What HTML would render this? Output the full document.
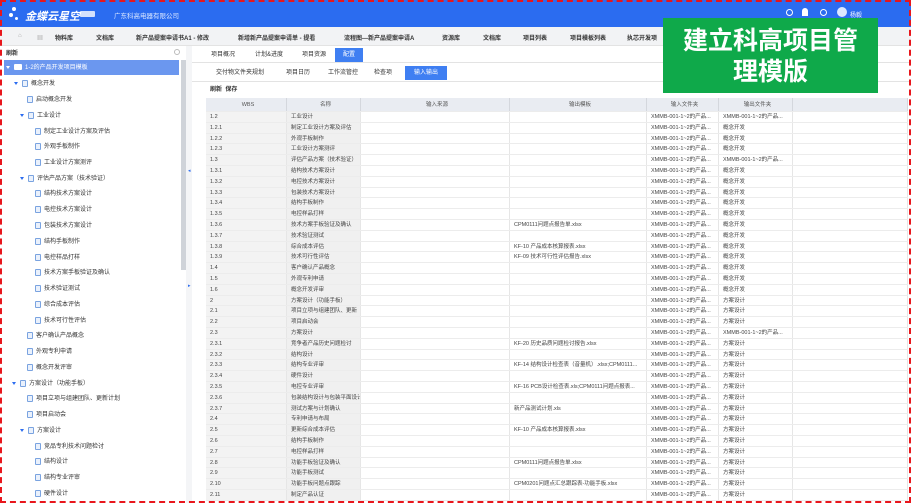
<!DOCTYPE html>
<html><head><meta charset="utf-8"><style>
*{margin:0;padding:0;box-sizing:border-box}
body{width:911px;height:503px;overflow:hidden;background:#fff;font-family:"Liberation Sans","Noto Sans CJK SC",sans-serif;font-size:6px;color:#333;position:relative}
.a{position:absolute;white-space:nowrap}
#top{left:0;top:0;width:911px;height:27px;background:#2b6cf0}
#nav{left:0;top:27px;width:911px;height:19px;background:#f2f3f5;border-bottom:1px solid #e3e3e3}
#nav span{position:absolute;top:6px;font-size:6px;font-weight:bold;color:#333}
.tree div{position:absolute;height:12px;line-height:12px;font-size:6px;color:#333}
.ic{display:inline-block;width:6px;height:7px;border:1px solid #7aa3e0;border-radius:1px;background:#eaf1fc;vertical-align:middle;margin-right:3px}
.ar{display:inline-block;width:0;height:0;border-left:2.5px solid transparent;border-right:2.5px solid transparent;border-top:3.5px solid #2b6cf0;vertical-align:middle;margin-right:4px}
.tab{position:absolute;height:14px;line-height:14px;text-align:center;font-size:6px;color:#333}
#tbl{left:206px;top:98px;width:702px}
.r{display:flex;height:10.8px;line-height:10.8px;border-bottom:1px solid #ececec;font-size:5.5px;color:#444}
.r div{overflow:hidden;white-space:nowrap;border-right:1px solid #e6e6e6;padding-left:4px}
.c1{width:81px;background:#f3f3f3}.c2{width:74px;background:#f0f0f0}.c3{width:149px}.c4{width:137px}.c5{width:72px}.c6{width:74px}.c7{flex:1}
.r.h{height:14px;line-height:14px;background:#e9ecf2;color:#555}
.h div{text-align:center;background:#e9ecf2!important;border-right:1px solid #d4d7dd}
</style></head><body>
<div class="a" id="top">
 <div class="a" style="left:12px;top:7px;width:4px;height:4px;border-radius:50%;background:#fff"></div>
 <div class="a" style="left:9px;top:13px;width:4px;height:4px;border-radius:50%;background:#fff"></div>
 <div class="a" style="left:15px;top:17px;width:3px;height:3px;border-radius:50%;background:#fff"></div>
 <div class="a" style="left:25px;top:8px;color:#fff;font-size:11px;font-weight:bold;font-style:italic">金蝶云星空</div>
 <div class="a" style="left:80px;top:11px;width:15px;height:6px;background:#fff;opacity:.8;border-radius:1px"></div>
 <div class="a" style="left:114px;top:10px;color:#dce8ff;font-size:6.5px">广东科高电器有限公司</div>
 <div class="a" style="left:786px;top:9px;width:7px;height:7px;border:1px solid #fff;border-radius:50%"></div>
 <div class="a" style="left:802px;top:8px;width:6px;height:8px;background:#fff;border-radius:3px 3px 0 0"></div>
 <div class="a" style="left:820px;top:9px;width:7px;height:7px;border:1px solid #fff;border-radius:50%"></div>
 <div class="a" style="left:837px;top:7px;width:10px;height:10px;background:#dde8ff;border-radius:50%"></div>
 <div class="a" style="left:850px;top:10px;color:#fff;font-size:6px">杨毅</div>
</div>
<div class="a" id="nav">
 <span style="left:18px;color:#aaa">⌂</span><span style="left:37px;color:#aaa">▦</span>
 <span style="left:55px">物料库</span><span style="left:96px">文档库</span><span style="left:136px">新产品提案申请书A1 - 修改</span>
 <span style="left:238px">新增新产品提案申请单 - 提看</span><span style="left:344px">流程图—新产品提案申请A</span>
 <span style="left:442px">资源库</span><span style="left:483px">文档库</span><span style="left:523px">项目列表</span><span style="left:570px">项目模板列表</span><span style="left:627px">执芯开发项</span>
</div>
<div class="a" style="left:6px;top:48px;font-size:6px;font-weight:bold">刷新</div>
<div class="a" style="left:174px;top:49px;width:6px;height:6px;border:1px solid #bbb;border-radius:50%"></div>
<div class="a" style="left:4px;top:60px;width:175px;height:15px;background:#6b97ef"></div>
<div class="a" style="left:181px;top:60px;width:5px;height:210px;background:#cfd3d9"></div>
<div class="a" style="left:186px;top:46px;width:6px;height:457px;background:#f4f5f7"></div>
<div class="a" style="left:188px;top:168px;color:#2b6cf0;font-size:5px">◂</div>
<div class="a" style="left:188px;top:283px;color:#2b6cf0;font-size:5px">▸</div>
<div class="tree">
<div style="left:6px;top:62px;color:#fff"><span class="ar" style="border-top-color:#fff"></span><span class="ic" style="width:8px;height:6px;background:#fff;border-color:#fff"></span>1-2的产品开发项目模板</div>
<div style="left:14px;top:78px"><span class="ar"></span><span class="ic"></span>概念开发</div>
<div style="left:27px;top:94px"><span class="ic"></span>启动概念开发</div>
<div style="left:20px;top:110px"><span class="ar"></span><span class="ic"></span>工业设计</div>
<div style="left:35px;top:126px"><span class="ic"></span>制定工业设计方案及评估</div>
<div style="left:35px;top:141px"><span class="ic"></span>外观手板制作</div>
<div style="left:35px;top:157px"><span class="ic"></span>工业设计方案测评</div>
<div style="left:20px;top:173px"><span class="ar"></span><span class="ic"></span>评估产品方案（技术验证）</div>
<div style="left:35px;top:188px"><span class="ic"></span>结构技术方案设计</div>
<div style="left:35px;top:204px"><span class="ic"></span>电控技术方案设计</div>
<div style="left:35px;top:220px"><span class="ic"></span>包装技术方案设计</div>
<div style="left:35px;top:236px"><span class="ic"></span>结构手板制作</div>
<div style="left:35px;top:252px"><span class="ic"></span>电控样品打样</div>
<div style="left:35px;top:267px"><span class="ic"></span>技术方案手板验证及确认</div>
<div style="left:35px;top:283px"><span class="ic"></span>技术验证测试</div>
<div style="left:35px;top:299px"><span class="ic"></span>综合成本评估</div>
<div style="left:35px;top:315px"><span class="ic"></span>技术可行性评估</div>
<div style="left:27px;top:330px"><span class="ic"></span>客户确认产品概念</div>
<div style="left:27px;top:346px"><span class="ic"></span>外观专利申请</div>
<div style="left:27px;top:362px"><span class="ic"></span>概念开发评审</div>
<div style="left:12px;top:378px"><span class="ar"></span><span class="ic"></span>方案设计（功能手板）</div>
<div style="left:27px;top:393px"><span class="ic"></span>项目立项与组建团队、更新计划</div>
<div style="left:27px;top:409px"><span class="ic"></span>项目启动会</div>
<div style="left:20px;top:425px"><span class="ar"></span><span class="ic"></span>方案设计</div>
<div style="left:35px;top:441px"><span class="ic"></span>竞品专利技术问题检讨</div>
<div style="left:35px;top:456px"><span class="ic"></span>结构设计</div>
<div style="left:35px;top:472px"><span class="ic"></span>结构专业评审</div>
<div style="left:35px;top:488px"><span class="ic"></span>硬件设计</div>
</div>
<div class="a" style="left:192px;top:62px;width:719px;height:1px;background:#e3e3e3"></div>
<div class="tab" style="left:203px;top:48px;width:40px">项目概况</div>
<div class="tab" style="left:248px;top:48px;width:42px">计划&amp;进度</div>
<div class="tab" style="left:294px;top:48px;width:40px">项目资源</div>
<div class="tab" style="left:335px;top:48px;width:28px;background:#3f7ff2;color:#fff">配置</div>
<div class="a" style="left:192px;top:81px;width:719px;height:1px;background:#e3e3e3"></div>
<div class="tab" style="left:210px;top:66px;width:60px">交付物文件夹规划</div>
<div class="tab" style="left:281px;top:66px;width:34px">项目日历</div>
<div class="tab" style="left:324px;top:66px;width:38px">工作流管控</div>
<div class="tab" style="left:369px;top:66px;width:28px">检查项</div>
<div class="tab" style="left:405px;top:66px;width:42px;background:#3f7ff2;color:#fff">输入输出</div>
<div class="a" style="left:210px;top:84px;font-size:6px;font-weight:bold">刷新 &nbsp;保存</div>
<div class="a" id="tbl">
<div class="r h"><div class="c1">WBS</div><div class="c2">名称</div><div class="c3">输入来源</div><div class="c4">输出模板</div><div class="c5">输入文件夹</div><div class="c6">输出文件夹</div><div class="c7"></div></div>
<div class="r"><div class="c1">1.2</div><div class="c2">工业设计</div><div class="c3"></div><div class="c4"></div><div class="c5">XMMB-001-1~2的产品...</div><div class="c6">XMMB-001-1~2的产品...</div><div class="c7"></div></div>
<div class="r"><div class="c1">1.2.1</div><div class="c2">制定工业设计方案及评估</div><div class="c3"></div><div class="c4"></div><div class="c5">XMMB-001-1~2的产品...</div><div class="c6">概念开发</div><div class="c7"></div></div>
<div class="r"><div class="c1">1.2.2</div><div class="c2">外观手板制作</div><div class="c3"></div><div class="c4"></div><div class="c5">XMMB-001-1~2的产品...</div><div class="c6">概念开发</div><div class="c7"></div></div>
<div class="r"><div class="c1">1.2.3</div><div class="c2">工业设计方案测评</div><div class="c3"></div><div class="c4"></div><div class="c5">XMMB-001-1~2的产品...</div><div class="c6">概念开发</div><div class="c7"></div></div>
<div class="r"><div class="c1">1.3</div><div class="c2">评估产品方案（技术验证）</div><div class="c3"></div><div class="c4"></div><div class="c5">XMMB-001-1~2的产品...</div><div class="c6">XMMB-001-1~2的产品...</div><div class="c7"></div></div>
<div class="r"><div class="c1">1.3.1</div><div class="c2">结构技术方案设计</div><div class="c3"></div><div class="c4"></div><div class="c5">XMMB-001-1~2的产品...</div><div class="c6">概念开发</div><div class="c7"></div></div>
<div class="r"><div class="c1">1.3.2</div><div class="c2">电控技术方案设计</div><div class="c3"></div><div class="c4"></div><div class="c5">XMMB-001-1~2的产品...</div><div class="c6">概念开发</div><div class="c7"></div></div>
<div class="r"><div class="c1">1.3.3</div><div class="c2">包装技术方案设计</div><div class="c3"></div><div class="c4"></div><div class="c5">XMMB-001-1~2的产品...</div><div class="c6">概念开发</div><div class="c7"></div></div>
<div class="r"><div class="c1">1.3.4</div><div class="c2">结构手板制作</div><div class="c3"></div><div class="c4"></div><div class="c5">XMMB-001-1~2的产品...</div><div class="c6">概念开发</div><div class="c7"></div></div>
<div class="r"><div class="c1">1.3.5</div><div class="c2">电控样品打样</div><div class="c3"></div><div class="c4"></div><div class="c5">XMMB-001-1~2的产品...</div><div class="c6">概念开发</div><div class="c7"></div></div>
<div class="r"><div class="c1">1.3.6</div><div class="c2">技术方案手板验证及确认</div><div class="c3"></div><div class="c4">CPM0111问题点报告单.xlsx</div><div class="c5">XMMB-001-1~2的产品...</div><div class="c6">概念开发</div><div class="c7"></div></div>
<div class="r"><div class="c1">1.3.7</div><div class="c2">技术验证测试</div><div class="c3"></div><div class="c4"></div><div class="c5">XMMB-001-1~2的产品...</div><div class="c6">概念开发</div><div class="c7"></div></div>
<div class="r"><div class="c1">1.3.8</div><div class="c2">综合成本评估</div><div class="c3"></div><div class="c4">KF-10 产品成本核算报表.xlsx</div><div class="c5">XMMB-001-1~2的产品...</div><div class="c6">概念开发</div><div class="c7"></div></div>
<div class="r"><div class="c1">1.3.9</div><div class="c2">技术可行性评估</div><div class="c3"></div><div class="c4">KF-09 技术可行性评估报告.xlsx</div><div class="c5">XMMB-001-1~2的产品...</div><div class="c6">概念开发</div><div class="c7"></div></div>
<div class="r"><div class="c1">1.4</div><div class="c2">客户确认产品概念</div><div class="c3"></div><div class="c4"></div><div class="c5">XMMB-001-1~2的产品...</div><div class="c6">概念开发</div><div class="c7"></div></div>
<div class="r"><div class="c1">1.5</div><div class="c2">外观专利申请</div><div class="c3"></div><div class="c4"></div><div class="c5">XMMB-001-1~2的产品...</div><div class="c6">概念开发</div><div class="c7"></div></div>
<div class="r"><div class="c1">1.6</div><div class="c2">概念开发评审</div><div class="c3"></div><div class="c4"></div><div class="c5">XMMB-001-1~2的产品...</div><div class="c6">概念开发</div><div class="c7"></div></div>
<div class="r"><div class="c1">2</div><div class="c2">方案设计（功能手板）</div><div class="c3"></div><div class="c4"></div><div class="c5">XMMB-001-1~2的产品...</div><div class="c6">方案设计</div><div class="c7"></div></div>
<div class="r"><div class="c1">2.1</div><div class="c2">项目立项与组建团队、更新</div><div class="c3"></div><div class="c4"></div><div class="c5">XMMB-001-1~2的产品...</div><div class="c6">方案设计</div><div class="c7"></div></div>
<div class="r"><div class="c1">2.2</div><div class="c2">项目启动会</div><div class="c3"></div><div class="c4"></div><div class="c5">XMMB-001-1~2的产品...</div><div class="c6">方案设计</div><div class="c7"></div></div>
<div class="r"><div class="c1">2.3</div><div class="c2">方案设计</div><div class="c3"></div><div class="c4"></div><div class="c5">XMMB-001-1~2的产品...</div><div class="c6">XMMB-001-1~2的产品...</div><div class="c7"></div></div>
<div class="r"><div class="c1">2.3.1</div><div class="c2">竞争者产品历史问题检讨</div><div class="c3"></div><div class="c4">KF-20 历史品质问题检讨报告.xlsx</div><div class="c5">XMMB-001-1~2的产品...</div><div class="c6">方案设计</div><div class="c7"></div></div>
<div class="r"><div class="c1">2.3.2</div><div class="c2">结构设计</div><div class="c3"></div><div class="c4"></div><div class="c5">XMMB-001-1~2的产品...</div><div class="c6">方案设计</div><div class="c7"></div></div>
<div class="r"><div class="c1">2.3.3</div><div class="c2">结构专业评审</div><div class="c3"></div><div class="c4">KF-14 结构设计检查表（音量机）.xlsx;CPM0111...</div><div class="c5">XMMB-001-1~2的产品...</div><div class="c6">方案设计</div><div class="c7"></div></div>
<div class="r"><div class="c1">2.3.4</div><div class="c2">硬件设计</div><div class="c3"></div><div class="c4"></div><div class="c5">XMMB-001-1~2的产品...</div><div class="c6">方案设计</div><div class="c7"></div></div>
<div class="r"><div class="c1">2.3.5</div><div class="c2">电控专业评审</div><div class="c3"></div><div class="c4">KF-16 PCB设计检查表.xls;CPM0111问题点报表...</div><div class="c5">XMMB-001-1~2的产品...</div><div class="c6">方案设计</div><div class="c7"></div></div>
<div class="r"><div class="c1">2.3.6</div><div class="c2">包装结构设计与包装平面设计</div><div class="c3"></div><div class="c4"></div><div class="c5">XMMB-001-1~2的产品...</div><div class="c6">方案设计</div><div class="c7"></div></div>
<div class="r"><div class="c1">2.3.7</div><div class="c2">测试方案与计划确认</div><div class="c3"></div><div class="c4">新产品测试计划.xls</div><div class="c5">XMMB-001-1~2的产品...</div><div class="c6">方案设计</div><div class="c7"></div></div>
<div class="r"><div class="c1">2.4</div><div class="c2">专利申请与布局</div><div class="c3"></div><div class="c4"></div><div class="c5">XMMB-001-1~2的产品...</div><div class="c6">方案设计</div><div class="c7"></div></div>
<div class="r"><div class="c1">2.5</div><div class="c2">更新综合成本评估</div><div class="c3"></div><div class="c4">KF-10 产品成本核算报表.xlsx</div><div class="c5">XMMB-001-1~2的产品...</div><div class="c6">方案设计</div><div class="c7"></div></div>
<div class="r"><div class="c1">2.6</div><div class="c2">结构手板制作</div><div class="c3"></div><div class="c4"></div><div class="c5">XMMB-001-1~2的产品...</div><div class="c6">方案设计</div><div class="c7"></div></div>
<div class="r"><div class="c1">2.7</div><div class="c2">电控样品打样</div><div class="c3"></div><div class="c4"></div><div class="c5">XMMB-001-1~2的产品...</div><div class="c6">方案设计</div><div class="c7"></div></div>
<div class="r"><div class="c1">2.8</div><div class="c2">功能手板验证及确认</div><div class="c3"></div><div class="c4">CPM0111问题点报告单.xlsx</div><div class="c5">XMMB-001-1~2的产品...</div><div class="c6">方案设计</div><div class="c7"></div></div>
<div class="r"><div class="c1">2.9</div><div class="c2">功能手板测试</div><div class="c3"></div><div class="c4"></div><div class="c5">XMMB-001-1~2的产品...</div><div class="c6">方案设计</div><div class="c7"></div></div>
<div class="r"><div class="c1">2.10</div><div class="c2">功能手板问题点跟踪</div><div class="c3"></div><div class="c4">CPM0201问题点汇总跟踪表-功能手板.xlsx</div><div class="c5">XMMB-001-1~2的产品...</div><div class="c6">方案设计</div><div class="c7"></div></div>
<div class="r"><div class="c1">2.11</div><div class="c2">制定产品认证</div><div class="c3"></div><div class="c4"></div><div class="c5">XMMB-001-1~2的产品...</div><div class="c6">方案设计</div><div class="c7"></div></div>
</div>
<div class="a" style="left:663px;top:18px;width:215px;height:75px;background:#0fa94a;color:#fff;font-weight:bold;font-size:25px;line-height:31px;text-align:center;padding-top:6px;white-space:normal;font-family:'Noto Sans CJK SC',sans-serif">建立科高项目管<br>理模版</div>
<div class="a" style="left:0;top:0;width:911px;height:503px;border:2px dashed #e8161c"></div>
</body></html>
